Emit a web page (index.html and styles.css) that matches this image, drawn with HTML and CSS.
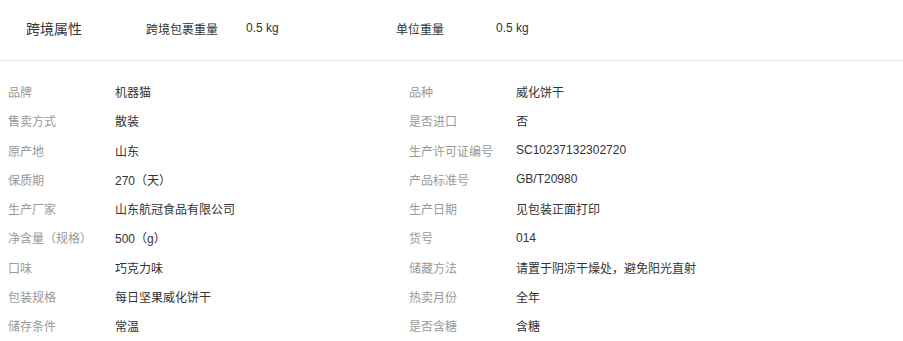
FILE: index.html
```html
<!DOCTYPE html>
<html lang="zh-CN">
<head>
<meta charset="utf-8">
<title>属性</title>
<link rel="stylesheet" href="styles.css">
</head>
<body>
<div class="header">
  <div class="header-title">跨境属性</div>
  <div class="header-label">跨境包裹重量</div>
  <div class="header-value">0.5 kg</div>
  <div class="header-label">单位重量</div>
  <div class="header-value">0.5 kg</div>
</div>
<div class="attrs">
  <div class="attr"><span class="label">品牌</span><span class="value">机器猫</span></div>
  <div class="attr"><span class="label">品种</span><span class="value">威化饼干</span></div>
  <div class="attr"><span class="label">售卖方式</span><span class="value">散装</span></div>
  <div class="attr"><span class="label">是否进口</span><span class="value">否</span></div>
  <div class="attr"><span class="label">原产地</span><span class="value">山东</span></div>
  <div class="attr"><span class="label">生产许可证编号</span><span class="value">SC10237132302720</span></div>
  <div class="attr"><span class="label">保质期</span><span class="value">270（天）</span></div>
  <div class="attr"><span class="label">产品标准号</span><span class="value">GB/T20980</span></div>
  <div class="attr"><span class="label">生产厂家</span><span class="value">山东航冠食品有限公司</span></div>
  <div class="attr"><span class="label">生产日期</span><span class="value">见包装正面打印</span></div>
  <div class="attr"><span class="label">净含量（规格）</span><span class="value">500（g）</span></div>
  <div class="attr"><span class="label">货号</span><span class="value">014</span></div>
  <div class="attr"><span class="label">口味</span><span class="value">巧克力味</span></div>
  <div class="attr"><span class="label">储藏方法</span><span class="value">请置于阴凉干燥处，避免阳光直射</span></div>
  <div class="attr"><span class="label">包装规格</span><span class="value">每日坚果威化饼干</span></div>
  <div class="attr"><span class="label">热卖月份</span><span class="value">全年</span></div>
  <div class="attr"><span class="label">储存条件</span><span class="value">常温</span></div>
  <div class="attr"><span class="label">是否含糖</span><span class="value">含糖</span></div>
</div>
</body>
</html>
```
FILE: styles.css
```css
html, body {
  margin: 0;
  padding: 0;
  background: #fff;
}
body {
  font-family: "Liberation Sans", "Noto Sans CJK SC", sans-serif;
  font-size: 12px;
  color: #333;
}
.header {
  display: flex;
  align-items: center;
  height: 56px;
  padding: 0 0 4px 26px;
  border-bottom: 1px solid #e5e5e5;
}
.header-title {
  width: 120px;
  font-size: 14px;
  color: #333;
}
.header-label {
  width: 100px;
  color: #333;
}
.header-value {
  width: 150px;
  color: #333;
}
.attrs {
  display: grid;
  grid-template-columns: 401px 1fr;
  padding: 16px 0 0 8px;
}
.attr {
  display: flex;
  align-items: center;
  height: 29.25px;
}
.label {
  width: 107px;
  flex-shrink: 0;
  color: #999;
}
.value {
  color: #333;
}
```
